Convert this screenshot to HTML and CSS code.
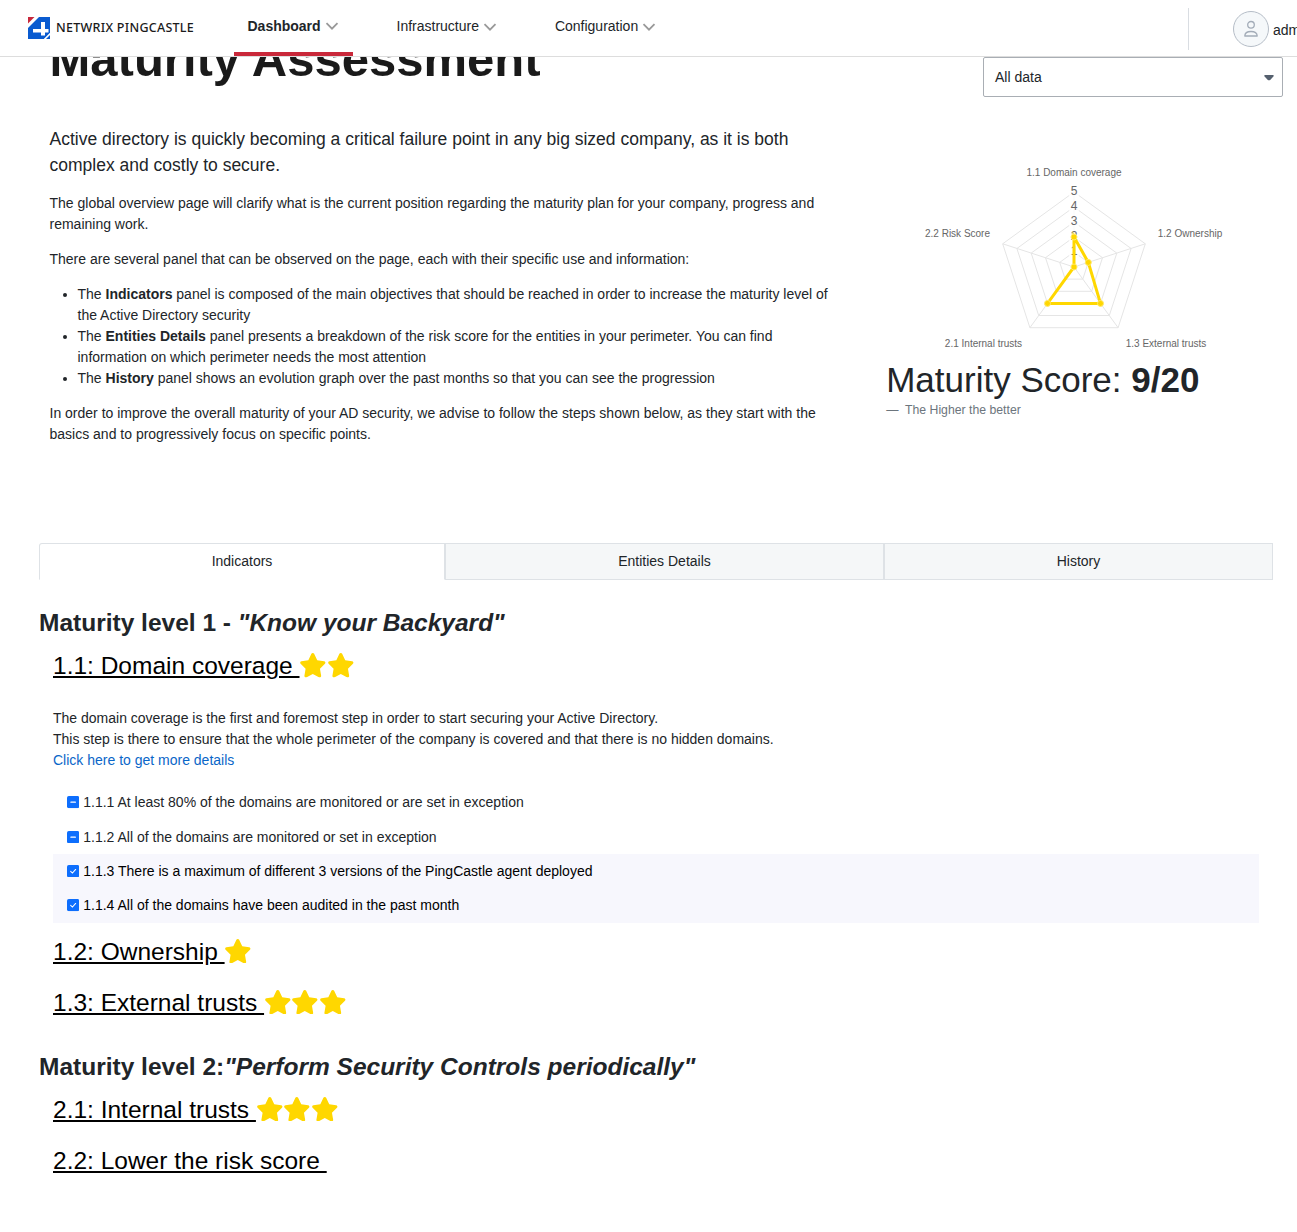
FILE: index.html
```html
<!DOCTYPE html>
<html lang="en">
<head>
<meta charset="utf-8">
<title>Maturity Assessment - Netwrix PingCastle</title>
<link rel="stylesheet" href="styles.css">
</head>
<body>
<svg width="0" height="0" class="defs" aria-hidden="true">
  <symbol id="star" viewBox="0 0 576 512"><path d="M316.9 18C311.6 7 300.4 0 288.1 0s-23.4 7-28.8 18L195 150.3 51.4 171.5c-12 1.8-22 10.2-25.7 21.7s-.7 24.2 7.9 32.7L137.8 329 113.2 474.7c-2 12 3 24.2 12.9 31.3s23 8 33.8 2.3l128.3-68.5 128.3 68.5c10.8 5.7 23.9 4.9 33.8-2.3s14.9-19.3 12.9-31.3L438.5 329 542.7 225.9c8.6-8.5 11.7-21.2 7.9-32.7s-13.7-19.9-25.7-21.7L381.2 150.3 316.9 18z"/></symbol>
  <symbol id="chev" viewBox="0 0 14 8"><path d="M1.5 1.2 7 6.7l5.500-5.500" fill="none" stroke="#999" stroke-width="1.800"/></symbol>
  <symbol id="minus" viewBox="0 0 14 14"><rect width="14" height="14" rx="2" fill="#0d6efd"/><path d="M4.500 7h5" stroke="#fff" stroke-width="1.500" stroke-linecap="round"/></symbol>
  <symbol id="check" viewBox="0 0 14 14"><rect width="14" height="14" rx="2" fill="#0d6efd"/><path d="m4.200 7.300 2 1.900 3.700-4.100" fill="none" stroke="#fff" stroke-width="1.200" stroke-linecap="round"/></symbol>
</svg>
<header class="topbar">
  <a class="brand">
    <svg width="22" height="22" viewBox="0 0 22 22"><path d="M0 0h6.500L0 6.500z" fill="#c8283c"/><path d="M11 0h11v16L16 22H0V11z" fill="#0a5bd0"/><path d="M13 5h4v7h3.500v3.500H17v3h-4v-3H5V12h8z" fill="#fff"/><path d="M22 16v2l-4 4h-2z" fill="#fff"/><path d="M22 18v4h-4z" fill="#0a5bd0"/></svg>
    <span>NETWRIX PINGCASTLE</span>
  </a>
  <nav class="menu">
    <a class="menu-item active">Dashboard<svg width="14" height="8"><use href="#chev"/></svg></a>
    <a class="menu-item">Infrastructure<svg width="14" height="8"><use href="#chev"/></svg></a>
    <a class="menu-item">Configuration<svg width="14" height="8"><use href="#chev"/></svg></a>
  </nav>
  <div class="user">
    <span class="avatar"><svg width="16" height="18" viewBox="0 0 16 18"><circle cx="8" cy="4.800" r="3.300"/><path d="M1.800 16c0-3 2.300-4.500 6.200-4.500s6.200 1.500 6.200 4.500z"/></svg></span>
    <span class="user-name">admin</span>
  </div>
</header>
<main>
  <section class="intro">
    <div class="intro-text">
      <h1>Maturity Assessment</h1>
      <p class="lead">Active directory is quickly becoming a critical failure point in any big sized company, as it is both complex and costly to secure.</p>
      <p>The global overview page will clarify what is the current position regarding the maturity plan for your company, progress and remaining work.</p>
      <p>There are several panel that can be observed on the page, each with their specific use and information:</p>
      <ul>
        <li>The <b>Indicators</b> panel is composed of the main objectives that should be reached in order to increase the maturity level of the Active Directory security</li>
        <li>The <b>Entities Details</b> panel presents a breakdown of the risk score for the entities in your perimeter. You can find information on which perimeter needs the most attention</li>
        <li>The <b>History</b> panel shows an evolution graph over the past months so that you can see the progression</li>
      </ul>
      <p>In order to improve the overall maturity of your AD security, we advise to follow the steps shown below, as they start with the basics and to progressively focus on specific points.</p>
    </div>
    <aside class="summary">
      <div class="select"><span>All data</span><svg width="10" height="6" viewBox="0 0 10 6"><path d="M1.200 0h7.600q1.600.4.600 1.600L6.200 4.900q-1.200.9-2.400 0L.6 1.600Q-.4.400 1.200 0z" fill="#55606e"/></svg></div>
      <svg class="radar" width="374" height="200" viewBox="887 160 374 200">
        <g class="grid">
          <path d="M1074 192l71.300 51.800-27.200 83.900h-88.200l-27.200-83.900z"/>
          <path d="M1074 207l57.100 41.500-21.800 67h-70.600l-21.800-67z"/>
          <path d="M1074 222l42.800 31.100-16.300 50.300h-53l-16.300-50.300z"/>
          <path d="M1074 237l28.500 20.700-10.900 33.600h-35.200l-10.900-33.600z"/>
          <path d="M1074 252l14.300 10.400-5.500 16.700h-17.600l-5.500-16.700z"/>
          <path d="M1074 267V192M1074 267l71.300-23.200M1074 267l44.100 60.700M1074 267l-44.100 60.700M1074 267l-71.300-23.200"/>
        </g>
        <path d="M1069 183h10v75h-10z" fill="#fff" fill-opacity=".75"/>
        <g class="ticks"><text x="1074" y="195">5</text><text x="1074" y="210">4</text><text x="1074" y="225">3</text><text x="1074" y="240">2</text><text x="1074" y="255">1</text></g>
        <path class="data" d="M1074 237l14.300 25.400 12.200 41h-53L1074 267z"/>
        <g class="pts"><circle cx="1074" cy="237" r="3"/><circle cx="1088.300" cy="262.400" r="3"/><circle cx="1100.500" cy="303.400" r="3"/><circle cx="1047.500" cy="303.400" r="3"/><circle cx="1074" cy="267" r="3"/></g>
        <g class="labels"><text x="1074" y="176">1.1 Domain coverage</text><text x="1190" y="237">1.2 Ownership</text><text x="1166" y="347">1.3 External trusts</text><text x="983.500" y="347">2.1 Internal trusts</text><text x="957.500" y="237">2.2 Risk Score</text></g>
      </svg>
      <p class="score">Maturity Score: <b>9/20</b></p>
      <p class="hint">—&nbsp; The Higher the better</p>
    </aside>
  </section>
  <div class="tabs"><a class="tab tab-on">Indicators</a><a class="tab">Entities Details</a><a class="tab">History</a></div>
  <section class="level">
    <h2>Maturity level 1 - <i>"Know your Backyard"</i></h2>
    <h3><a>1.1: Domain coverage </a><svg><use href="#star"/></svg><svg><use href="#star"/></svg></h3>
    <div class="detail">
      <p>The domain coverage is the first and foremost step in order to start securing your Active Directory.<br>This step is there to ensure that the whole perimeter of the company is covered and that there is no hidden domains.<br><a class="link">Click here to get more details</a></p>
      <ul class="checks">
        <li><svg><use href="#minus"/></svg>1.1.1 At least 80% of the domains are monitored or are set in exception</li>
        <li><svg><use href="#minus"/></svg>1.1.2 All of the domains are monitored or set in exception</li>
        <li class="done"><svg><use href="#check"/></svg>1.1.3 There is a maximum of different 3 versions of the PingCastle agent deployed</li>
        <li class="done"><svg><use href="#check"/></svg>1.1.4 All of the domains have been audited in the past month</li>
      </ul>
    </div>
    <h3><a>1.2: Ownership </a><svg><use href="#star"/></svg></h3>
    <h3><a>1.3: External trusts </a><svg><use href="#star"/></svg><svg><use href="#star"/></svg><svg><use href="#star"/></svg></h3>
  </section>
  <section class="level level-next">
    <h2>Maturity level 2:<i>"Perform Security Controls periodically"</i></h2>
    <h3><a>2.1: Internal trusts </a><svg><use href="#star"/></svg><svg><use href="#star"/></svg><svg><use href="#star"/></svg></h3>
    <h3><a>2.2: Lower the risk score </a></h3>
  </section>
</main>
</body>
</html>
```
FILE: styles.css
```css
* { box-sizing: border-box; }
html { overflow: hidden; }
body { margin: 0; height: 1232px; overflow: hidden; font: 14px/21px "Liberation Sans", Arial, sans-serif; color: #212529; background: #fff; }
.defs { position: absolute; }
p, h1, h2, h3, ul { margin: 0; }

.topbar { position: relative; z-index: 2; display: flex; height: 57px; width: 1297px; background: #fff; border-bottom: 1px solid #ddd; overflow: visible; }
.brand { display: flex; align-items: center; gap: 6px; width: 234px; padding-left: 28px; font: 12.5px/20px "Noto Sans", sans-serif; font-weight: 500; letter-spacing: .27px; color: #1a1a1a; white-space: nowrap; }
.menu { display: flex; gap: 30px; height: 56px; }
.menu-item { display: flex; align-items: center; gap: 4px; padding: 0 14.4px 3px 13.5px; border-bottom: 0 solid #c9283a; color: #212529; }
.menu-item.active { font-weight: bold; border-bottom-width: 4px; padding-bottom: 0; }
.user { display: flex; align-items: center; gap: 4px; width: 109px; height: 42px; margin: 8px 0 0 auto; padding-left: 44px; border-left: 1px solid #d9dde2; white-space: nowrap; overflow: hidden; }
.user-name { padding-top: 2px; }
.avatar { flex: none; display: flex; align-items: center; justify-content: center; width: 36px; height: 36px; border: 1px solid #b5bdc7; border-radius: 50%; background: #f5f8fa; }
.avatar svg { fill: none; stroke: #a3acb8; stroke-width: 1.3; stroke-linejoin: round; }

.intro { display: flex; justify-content: space-between; height: 486px; padding: 0 14px 0 49.5px; }
.intro-text { width: 784px; margin-top: -27.5px; }
h1 { margin-bottom: 37.7px; font-size: 49px; line-height: 58.8px; color: #1a1a1a; }
.intro-text p, .intro-text ul { margin-bottom: 14px; }
.intro-text ul { padding-left: 28px; }
.intro-text .lead { margin-bottom: 14.4px; font-size: 17.5px; line-height: 26.25px; }
.summary { width: 396.8px; display: flex; flex-direction: column; }
.select { display: flex; align-items: center; justify-content: space-between; align-self: flex-end; width: 300px; height: 40px; padding: 1px 8px 0 11px; border: 1px solid #a9aeb4; border-radius: 2px; }
.radar { margin: 63px 0 0 .8px; font-family: "Liberation Sans", sans-serif; }
.grid { fill: none; stroke: #e5e5e5; }
.radar text { text-anchor: middle; fill: #666; }
.ticks { font-size: 12px; }
.labels { font-size: 10px; }
.data { fill: none; stroke: gold; stroke-width: 3; }
.pts { fill: gold; stroke: #ffe96b; stroke-width: 1; }
.score { margin-top: -1px; font-size: 35px; line-height: 42px; }
.hint { margin-top: -1px; font-size: 12.25px; color: #6c757d; }

.tabs { display: flex; height: 37px; margin: 0 24px 0 39px; }
.tab { width: 439px; line-height: 35px; text-align: center; background: #f5f7f8; border: 1px solid #dee2e6; }
.tab-on { width: 406px; background: #fff; border-bottom-color: #fff; border-top-left-radius: 3px; }
.tab:last-child { width: 389px; }

.level { padding: 0 38px 0 39px; }
.level h2 { padding-top: 28px; font-size: 24.5px; line-height: 29.4px; }
.level-next h2 { padding-top: 24px; }
.level h3 { display: flex; align-items: center; height: 51px; margin-left: 14px; font-size: 24.5px; font-weight: 400; line-height: 29px; color: #000; }
.level h2 + h3 { margin-top: 3px; }
h3 a { text-decoration: underline; white-space: pre; }
h3 svg { width: 27.56px; height: 24.5px; margin: 0 .2px .5px -.2px; fill: gold; }
.detail { padding: 17px 0 3px 14px; }
.link { color: #0a66c8; }
.checks { display: flex; flex-direction: column; padding: 14px 0 0; list-style: none; }
.checks li { display: flex; align-items: center; gap: 4px; height: 34.2px; padding-left: 14px; }
.checks li:nth-child(2) { height: 34.6px; padding-top: .8px; }
.checks svg { width: 12.25px; height: 12.25px; }
.done { background: #f7f7fd; color: #000; }
```
